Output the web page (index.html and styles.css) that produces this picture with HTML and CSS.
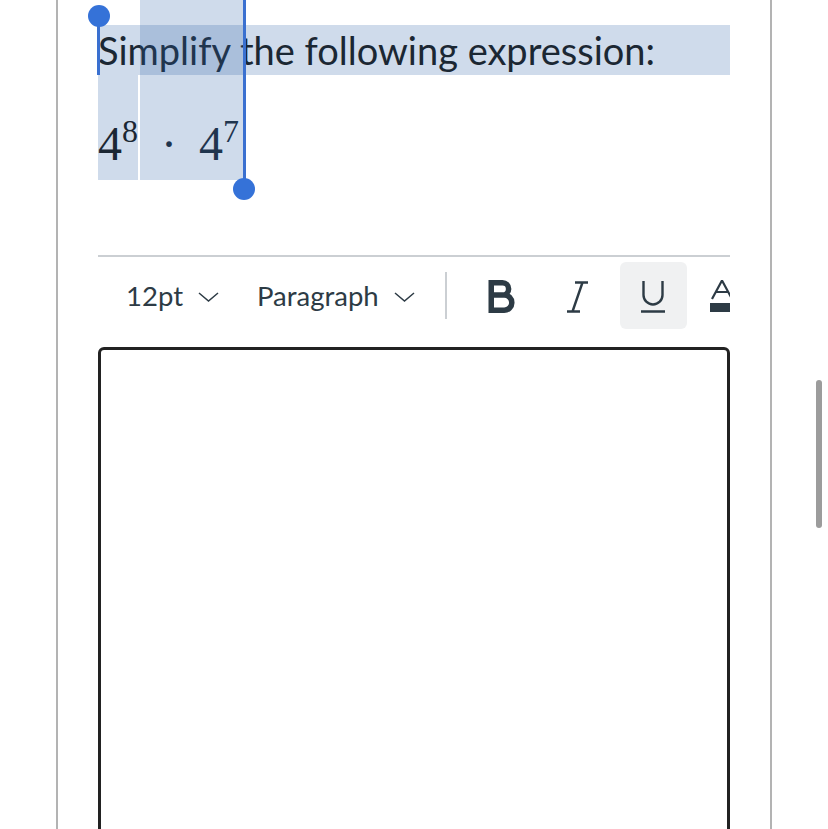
FILE: index.html
```html
<!DOCTYPE html>
<html lang="en">
<head>
<meta charset="utf-8">
<title>Question</title>
<link rel="stylesheet" href="styles.css">
</head>
<body>
<div class="frame">
  <div class="question">
    <p class="prompt">Simplify the following expression:</p>
    <div class="math-row">
      <span class="m1"><span class="base">4</span><span class="sup">8</span></span>
      <span class="m2"><span class="dot">·</span><span class="base b2">4</span><span class="sup">7</span></span>
    </div>
    <div class="sel-overlay"></div>
    <div class="caret caret-start"></div>
    <div class="handle handle-start"></div>
    <div class="caret caret-end"></div>
    <div class="handle handle-end"></div>
  </div>

  <div class="toolbar">
    <div class="dropdown dd-size">
      <span class="dd-label">12pt</span>
      <svg class="chev" width="21" height="10" viewBox="0 0 21 10"><path d="M1 1 L10.5 9 L20 1" fill="none" stroke="#2d3b45" stroke-width="1.5"/></svg>
    </div>
    <div class="dropdown dd-block">
      <span class="dd-label">Paragraph</span>
      <svg class="chev" width="21" height="10" viewBox="0 0 21 10"><path d="M1 1 L10.5 9 L20 1" fill="none" stroke="#2d3b45" stroke-width="1.5"/></svg>
    </div>
    <div class="sep"></div>
    <div class="tbtn">
      <svg width="27" height="33" viewBox="0 0 27 33"><path d="M3.25 2.75 V30.25 M3.25 2.75 H14.5 A6.1 6.1 0 0 1 14.5 15 H3.25 M3.25 15 H16.2 A7.6 7.6 0 0 1 16.2 30.25 H3.25" fill="none" stroke="#2d3b45" stroke-width="5.5" stroke-linecap="square"/></svg>
    </div>
    <div class="tbtn">
      <svg width="23" height="32" viewBox="0 0 23 32"><path d="M9 1.5 H22 M1 30.5 H14 M16.5 1.5 L6.5 30.5" fill="none" stroke="#2d3b45" stroke-width="2.4"/></svg>
    </div>
    <div class="tbtn active">
      <svg width="26" height="32" viewBox="0 0 26 32"><path d="M3.5 0 V14 A9.5 9.5 0 0 0 22.5 14 V0 M1 30.5 H25" fill="none" stroke="#2d3b45" stroke-width="2.4"/></svg>
    </div>
    <div class="tbtn tbtn-a">
      <svg width="30" height="32" viewBox="0 0 30 32"><path d="M2 19 L12 0.5 L22 19 M6 12 H18" fill="none" stroke="#2d3b45" stroke-width="2.2"/><rect x="0" y="23" width="30" height="9" fill="#2d3b45"/></svg>
    </div>
  </div>

  <div class="editor"></div>
</div>
<div class="scrollbar"></div>
</body>
</html>
```

FILE: styles.css
```css
html, body {
  margin: 0;
  padding: 0;
  overflow: hidden;
  height: 829px;
  background: #ffffff;
}

body {
  font-family: Lato, "Noto Sans", sans-serif;
  color: #2d3b45;
  position: relative;
}

.frame {
  margin-left: 56px;
  width: 632px;
  height: 829px;
  padding: 0 40px;
  border-left: 2px solid #b3b3b3;
  border-right: 2px solid #b3b3b3;
}

.question {
  position: relative;
  padding-top: 25px;
}

.prompt {
  margin: 0;
  height: 50px;
  line-height: 50px;
  font-size: 38px;
  color: #1b2733;
  background: #cfdbeb;
  white-space: nowrap;
}

.math-row {
  display: flex;
  gap: 2px;
  height: 105px;
  font-family: "Liberation Serif", "Times New Roman", serif;
  color: #1b2733;
}

.m1, .m2 {
  display: block;
  height: 105px;
  box-sizing: border-box;
  padding-top: 48px;
  line-height: 42px;
  font-size: 48px;
  white-space: nowrap;
}

.m1 {
  width: 40px;
  background: #cfdbeb;
}

.m2 {
  width: 103px;
  padding-left: 21px;
}

.base.b2 {
  margin-left: 22px;
}

.sup {
  font-size: 32px;
  vertical-align: 18px;
  line-height: 0;
}

.dot {
  display: inline-block;
}

.sel-overlay {
  position: absolute;
  left: 42px;
  top: 0;
  width: 103px;
  height: 180px;
  background: rgba(46, 98, 168, 0.23);
}

.caret {
  position: absolute;
  width: 3px;
  background: #3a70d0;
}

.caret-start {
  left: -1px;
  top: 15px;
  height: 60px;
}

.caret-end {
  left: 145px;
  top: 0;
  height: 190px;
}

.handle {
  position: absolute;
  width: 22px;
  height: 22px;
  border-radius: 50%;
  background: #3572d8;
}

.handle-start {
  left: -10px;
  top: 5px;
}

.handle-end {
  left: 135px;
  top: 178px;
}

.toolbar {
  margin-top: 75px;
  border-top: 2px solid #cbcfd3;
  padding: 5px 0;
  display: flex;
  align-items: center;
  overflow: hidden;
  height: 67px;
}

.dropdown {
  display: flex;
  align-items: center;
  flex: none;
}

.dd-label {
  font-size: 27.5px;
  color: #2d3b45;
}

.chev {
  display: block;
  margin-left: 15px;
  margin-top: 2px;
}

.dd-size {
  margin-left: 28px;
}

.dd-block {
  margin-left: 38px;
}

.sep {
  flex: none;
  width: 2px;
  height: 47px;
  margin-left: 30px;
  background: #cbcfd3;
}

.tbtn {
  flex: none;
  width: 67px;
  height: 67px;
  border-radius: 6px;
  display: flex;
  align-items: center;
  justify-content: center;
  margin-left: 9px;
}

.sep + .tbtn {
  margin-left: 21px;
}

.tbtn svg {
  display: block;
  margin-top: 2px;
}

.tbtn.active {
  background: #f0f1f2;
}

.tbtn-a {
  justify-content: flex-start;
  padding-left: 14px;
  box-sizing: border-box;
}

.tbtn-a svg {
  margin-top: 0;
}

.editor {
  margin-top: 13px;
  height: 600px;
  border: 3px solid #222222;
  border-radius: 6px;
}

.scrollbar {
  position: absolute;
  left: 816px;
  top: 380px;
  width: 6px;
  height: 148px;
  border-radius: 3px;
  background: #9c9c9c;
}
```
